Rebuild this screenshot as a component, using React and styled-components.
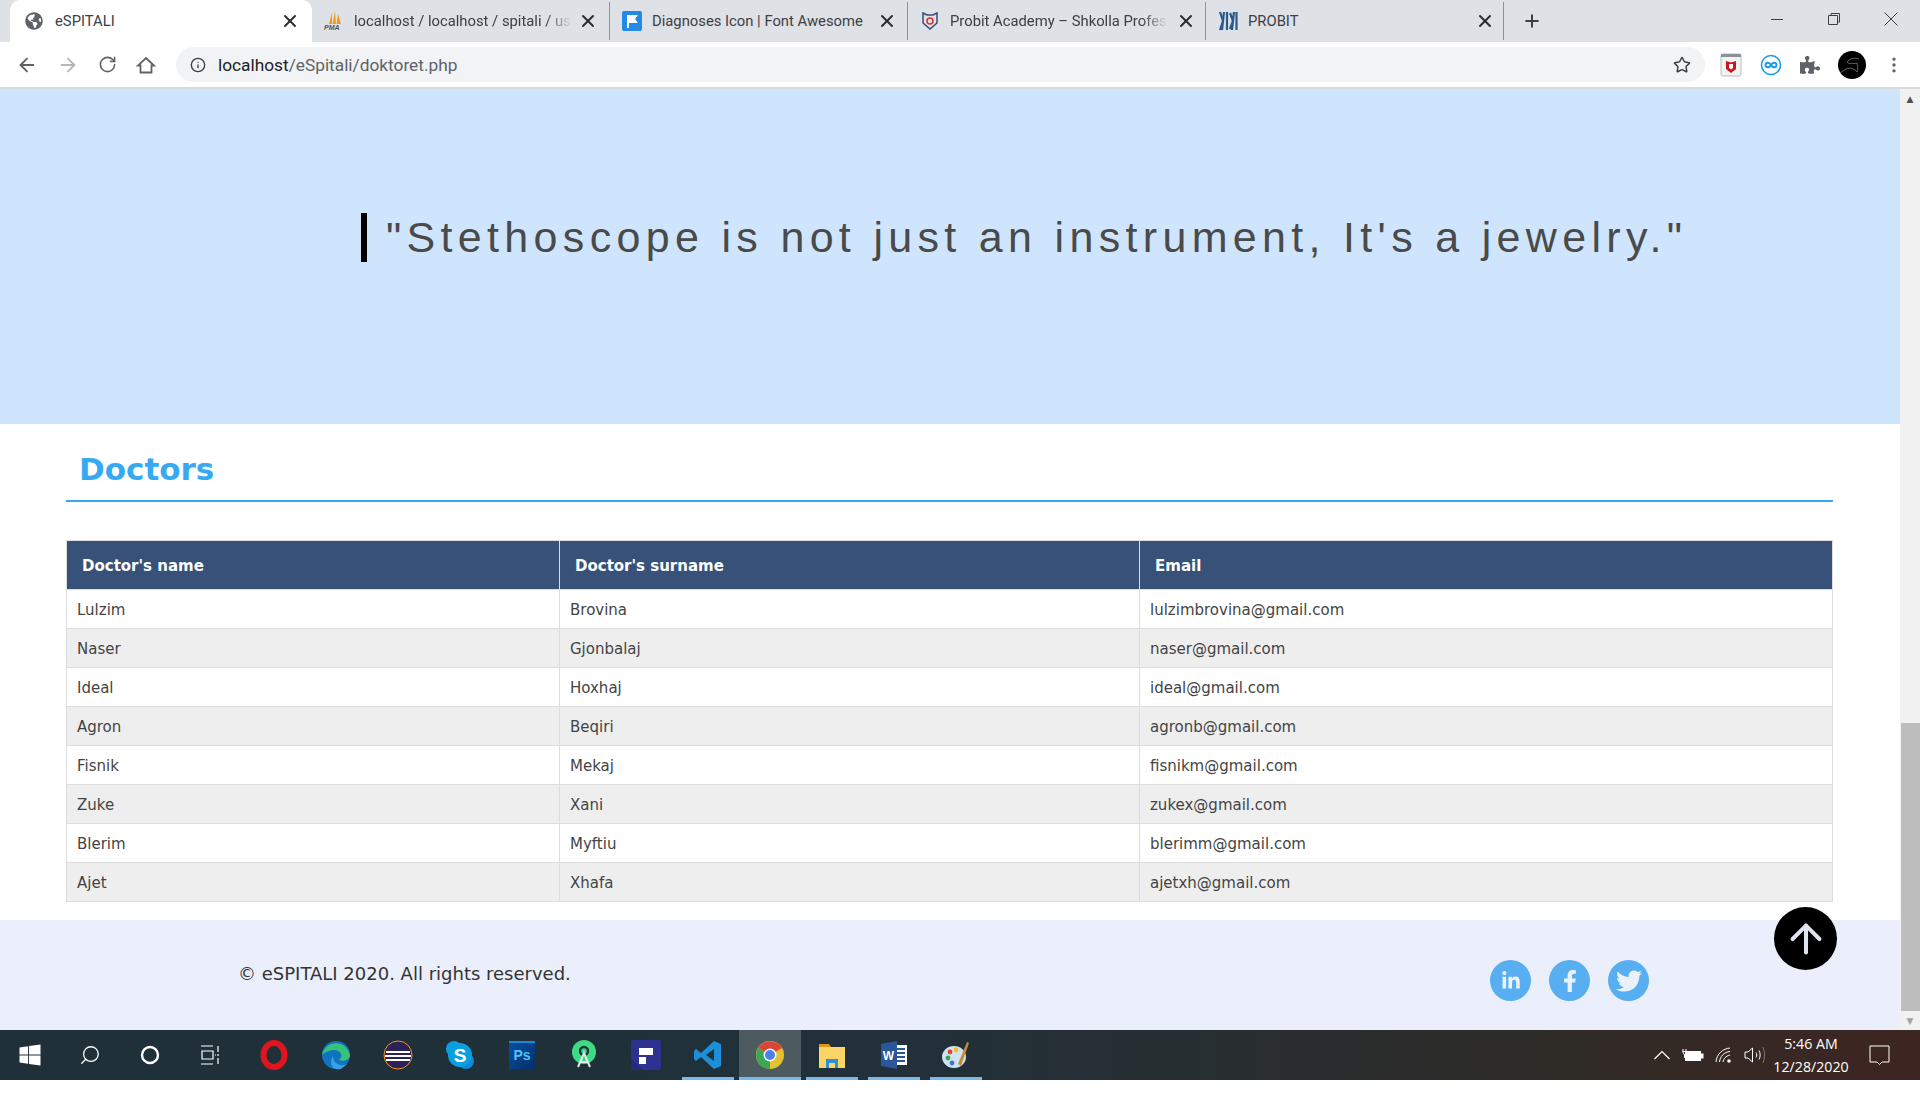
import React from 'react';
import styled, { createGlobalStyle } from 'styled-components';
import { ArrowLeft, ArrowRight, RotateCw, Info, Star, Plus, X, MoreVertical, Search, ArrowUp } from 'lucide-react';
import { FaLinkedinIn, FaFacebookF, FaTwitter, FaWindows, FaGlobeAmericas, FaPuzzlePiece } from 'react-icons/fa';

const GlobalStyle = createGlobalStyle`
  html, body { margin: 0; padding: 0; background: #fff; overflow: hidden; }
  * { box-sizing: border-box; }
`;

const Screen = styled.div`
  width: 1920px;
  height: 1098px;
  display: flex;
  flex-direction: column;
  background: #fff;
  overflow: hidden;
  font-family: "DejaVu Sans", Verdana, sans-serif;
`;

/* browser chrome */
const TabStrip = styled.div`
  height: 42px;
  flex: none;
  display: flex;
  background: #dee1e6;
  padding-left: 10px;
`;
const Tab = styled.div`
  width: ${(p) => (p.$active ? '302px' : '298px')};
  height: ${(p) => (p.$active ? '42px' : '38px')};
  margin-top: ${(p) => (p.$active ? '0' : '2px')};
  display: flex;
  align-items: center;
  padding-left: ${(p) => (p.$active ? '15px' : '12px')};
  gap: ${(p) => (p.$active ? '12px' : '10px')};
  background: ${(p) => (p.$active ? '#fff' : 'transparent')};
  border-radius: ${(p) => (p.$active ? '10px 10px 0 0' : '0')};
  border-right: ${(p) => (p.$active ? 'none' : '1px solid #8f9398')};
  svg { flex: none; }
`;
const TabTitle = styled.span`
  flex: none;
  width: 218px;
  margin-right: -20px;
  white-space: nowrap;
  font: 14.8px/18px Roboto, sans-serif;
  color: #3c4043;
  mask-image: ${(p) => (p.$fade ? 'linear-gradient(90deg, #000 88%, transparent 100%)' : 'none')};
`;
const TabClose = styled.span`
  display: flex;
  margin-left: auto;
  margin-right: ${(p) => p.$right}px;
  color: #2a2c2f;
`;
const NewTab = styled.div`
  display: flex;
  align-items: center;
  margin-left: 18px;
  color: #3c4043;
`;
const WindowButtons = styled.div`
  margin-left: auto;
  display: flex;
  align-items: center;
  height: 38px;
  gap: 43px;
  padding-right: 22px;
`;
const Toolbar = styled.div`
  height: 47px;
  flex: none;
  display: flex;
  align-items: center;
  background: #fff;
  border-bottom: 2px solid #dadada;
  padding: 0 16px;
`;
const NavIcons = styled.div`
  display: flex;
  align-items: center;
  gap: 19px;
  width: 160px;
  flex: none;
  color: #5f6368;
`;
const Omnibox = styled.div`
  width: 1529px;
  height: 35px;
  flex: none;
  display: flex;
  align-items: center;
  gap: 12px;
  background: #f1f3f4;
  border-radius: 18px;
  padding: 0 14px;
  color: #5f6368;
`;
const UrlText = styled.span`
  font: 17.3px/20px Roboto, sans-serif;
  color: #5f6368;
  b { font-weight: 400; color: #202124; }
`;
const StarSlot = styled.span`
  margin-left: auto;
  display: flex;
`;
const Extensions = styled.div`
  flex: 1;
  display: flex;
  align-items: center;
  justify-content: space-between;
  padding-left: 15px;
  color: #5f6368;
`;

/* page */
const Viewport = styled.div`
  height: 941px;
  flex: none;
  display: flex;
  position: relative;
`;
const Page = styled.div`
  width: 1900px;
  flex: none;
  display: flex;
  flex-direction: column;
`;
const Banner = styled.section`
  height: 335px;
  flex: none;
  background: #cfe5fd;
  padding: 124px 0 0 361px;
`;
const Quote = styled.blockquote`
  margin: 0;
  border-left: 6px solid #000;
  padding-left: 19px;
  font: 43px/49px "Liberation Sans", Arial, sans-serif;
  letter-spacing: 5.32px;
  color: #4a4a4a;
  white-space: nowrap;
`;
const Section = styled.section`
  flex: 1;
  padding: 0 67px 0 66px;
`;
const SectionTitle = styled.h2`
  margin: 0;
  height: 78px;
  padding: 26px 0 0 13px;
  font: 700 31px/38px "DejaVu Sans", Verdana, sans-serif;
  color: #35aaf3;
  border-bottom: 2px solid #35aaf3;
`;
const Table = styled.table`
  margin-top: 38px;
  width: 100%;
  table-layout: fixed;
  border-collapse: collapse;
  font-size: 15px;
  color: #444;
`;
const Column = styled.col`
  width: ${(p) => p.$w || 'auto'};
`;
const HeadCell = styled.th`
  height: 49px;
  padding: 2px 15px 0;
  background: #375179;
  color: #fff;
  font-size: 15px;
  font-weight: 700;
  text-align: left;
  border: 1px solid #ddd;
`;
const Row = styled.tr`
  background: ${(p) => (p.$even ? '#eee' : '#fff')};
`;
const Cell = styled.td`
  height: 39px;
  padding: 2px 10px 0;
  border: 1px solid #ddd;
`;
const Footer = styled.footer`
  height: 110px;
  flex: none;
  display: flex;
  background: #ebeffb;
  padding: 41px 251px 0 238px;
`;
const Copyright = styled.span`
  font-size: 18px;
  line-height: 26px;
  color: #333;
`;
const Socials = styled.div`
  display: flex;
  gap: 18px;
  margin: -1px 0 0 auto;
  align-self: flex-start;
`;
const SocialLink = styled.a`
  width: 41px;
  height: 41px;
  border-radius: 50%;
  display: flex;
  align-items: center;
  justify-content: center;
  background: #57aef1;
  color: #e9f2fb;
  font-size: ${(p) => p.$size || 22}px;
`;
const BackToTop = styled.a`
  position: absolute;
  left: 1774px;
  top: 818px;
  width: 63px;
  height: 63px;
  border-radius: 50%;
  background: #000;
  color: #dfe4f2;
  display: flex;
  align-items: center;
  justify-content: center;
`;
const Scrollbar = styled.div`
  width: 20px;
  flex: none;
  display: flex;
  flex-direction: column;
  background: #f1f1f1;
`;
const ScrollArrow = styled.div`
  height: 19px;
  flex: none;
  display: flex;
  align-items: center;
  justify-content: center;
  font-size: 9px;
  color: ${(p) => (p.$dim ? '#a3a3a3' : '#505050')};
`;
const ScrollGap = styled.div`
  flex: 1;
`;
const ScrollThumb = styled.div`
  height: 288px;
  flex: none;
  margin-left: 1px;
  background: #bdbdbd;
`;

/* windows taskbar */
const Taskbar = styled.div`
  height: 50px;
  flex: none;
  display: flex;
  align-items: center;
  background: linear-gradient(90deg, #1f3039 0%, #21303a 45%, #2e2c28 80%, #3e2521 100%);
  color: #fff;
`;
const SystemIcon = styled.div`
  width: 60px;
  height: 50px;
  flex: none;
  display: flex;
  align-items: center;
  justify-content: center;
`;
const TaskApps = styled.div`
  display: flex;
  margin-left: 3px;
`;
const TaskIcon = styled.div`
  width: 62px;
  height: 50px;
  flex: none;
  display: flex;
  align-items: center;
  justify-content: center;
  background: ${(p) => (p.$active ? '#4d5a60' : 'transparent')};
  position: relative;
  &::after {
    content: '';
    display: ${(p) => (p.$open ? 'block' : 'none')};
    position: absolute;
    left: ${(p) => (p.$active ? '0' : '5px')};
    right: ${(p) => (p.$active ? '0' : '5px')};
    bottom: 0;
    height: 3px;
    background: #76b9ed;
  }
`;
const SearchGlass = styled(Search)`
  transform: scaleX(-1);
`;
const Tray = styled.div`
  margin-left: auto;
  display: flex;
  align-items: center;
  gap: 11px;
  padding-right: 30px;
`;
const Clock = styled.div`
  width: 76px;
  margin: 0 9px 0 -3px;
  font: 14.2px/23px "Open Sans", sans-serif;
  text-align: center;
  white-space: nowrap;
`;

const doctors = [
  ['Lulzim', 'Brovina', 'lulzimbrovina@gmail.com'],
  ['Naser', 'Gjonbalaj', 'naser@gmail.com'],
  ['Ideal', 'Hoxhaj', 'ideal@gmail.com'],
  ['Agron', 'Beqiri', 'agronb@gmail.com'],
  ['Fisnik', 'Mekaj', 'fisnikm@gmail.com'],
  ['Zuke', 'Xani', 'zukex@gmail.com'],
  ['Blerim', 'Myftiu', 'blerimm@gmail.com'],
  ['Ajet', 'Xhafa', 'ajetxh@gmail.com'],
];

const PmaIcon = () => (
  <svg width="20" height="20" viewBox="0 0 20 20">
    <path d="M8 1 L5 13 H8 Z M11 0 L8.5 13 H12 Z M14 3 L12.5 13 H17 Z" fill="#f29a18" />
    <text x="0" y="19" fontSize="7" fontWeight="700" fontStyle="italic" fill="#555" fontFamily="Liberation Sans">PMA</text>
  </svg>
);
const FlagIcon = () => (
  <svg width="20" height="20" viewBox="0 0 20 20">
    <rect width="20" height="20" rx="2" fill="#228ae6" />
    <path d="M6 4 V17 M6 5 H14 L12 8 L14 11 H6" stroke="#fff" strokeWidth="2" fill="#fff" />
  </svg>
);
const ShieldIcon = () => (
  <svg width="20" height="20" viewBox="0 0 20 20" fill="none">
    <path d="M3 2 L7 4 H13 L17 2 V12 L10 18 L3 12 Z" stroke="#3a4a7c" strokeWidth="1.5" />
    <circle cx="10" cy="10" r="3" stroke="#d8362f" strokeWidth="1.6" />
  </svg>
);
const ProbitIcon = () => (
  <svg width="20" height="20" viewBox="0 0 20 20" fill="none" stroke="#2b5a8c" strokeWidth="2.2">
    <path d="M2 1 L5 10 L2 19 M6 1 L4 19 M9 1 V19 M12 2 L15 10 L12 18 M16 1 L14 19 M18.5 1 V19" />
  </svg>
);
const McAfeeIcon = () => (
  <svg width="22" height="24" viewBox="0 0 22 24">
    <rect x="1" y="1" width="20" height="22" rx="2" fill="#f3f3f3" stroke="#bbb" />
    <rect x="1" y="1" width="20" height="3" fill="#8a9299" />
    <path d="M6 8 L11 9.5 L16 8 V16 L11 20 L6 16 Z" fill="#c8161d" />
    <path d="M9 11 H13 V15 L11 16.5 L9 15 Z" fill="#fff" />
  </svg>
);
const LoopIcon = () => (
  <svg width="22" height="22" viewBox="0 0 22 22" fill="none">
    <circle cx="11" cy="11" r="9.5" stroke="#1a9cf0" strokeWidth="1.6" />
    <path d="M11 11 C9 7.5 5.5 8.5 5.5 11 C5.5 13.5 9 14.5 11 11 C13 7.5 16.5 8.5 16.5 11 C16.5 13.5 13 14.5 11 11" stroke="#1a9cf0" strokeWidth="2" />
  </svg>
);
const AvatarLogo = () => (
  <svg width="28" height="28" viewBox="0 0 28 28" fill="none">
    <circle cx="14" cy="14" r="14" fill="#000" />
    <path d="M21 8 C17 6 10 8 9.5 11 C9 13 15 13 19 12 M19 12 C20 15 20 19 19 21 C17 18 12 16 8 18 L2 22" stroke="#8d8d8d" strokeWidth="0.7" />
  </svg>
);
const HomeIcon = () => (
  <svg width="20" height="20" viewBox="0 0 20 20" fill="none" stroke="currentColor" strokeWidth="1.8">
    <path d="M10 3 L18 10.5 H15.5 V17.5 H4.5 V10.5 H2 Z" />
  </svg>
);
const MinimizeIcon = () => (
  <svg width="14" height="14" viewBox="0 0 14 14" stroke="#3c4043"><path d="M1 7.5 H13" /></svg>
);
const RestoreIcon = () => (
  <svg width="14" height="14" viewBox="0 0 14 14" fill="none" stroke="#3c4043"><path d="M1.5 3.5 H10.5 V12.5 H1.5 Z M4 3.5 V1.5 H12.5 V10 H10.5" /></svg>
);
const CloseIcon = () => (
  <svg width="14" height="14" viewBox="0 0 14 14" stroke="#3c4043"><path d="M0.5 0.5 L13.5 13.5 M13.5 0.5 L0.5 13.5" /></svg>
);

const CortanaRing = () => (
  <svg width="20" height="20" viewBox="0 0 20 20" fill="none"><circle cx="10" cy="10" r="8" stroke="#fff" strokeWidth="2.4" /></svg>
);
const TaskView = () => (
  <svg width="20" height="20" viewBox="0 0 20 20" fill="none" stroke="#fff" strokeWidth="1.2">
    <path d="M1 1 H13 M1 19 H13 M2 6 H13 V14 H2 Z M18 1 V7 M18 9 V11 M18 13 V19 M15 10 H16" />
  </svg>
);
const Opera = () => (
  <svg width="28" height="30" viewBox="0 0 28 30" fill="none">
    <ellipse cx="14" cy="15" rx="10.5" ry="12" stroke="#e0141f" strokeWidth="6" />
  </svg>
);
const Edge = () => (
  <svg width="30" height="30" viewBox="0 0 30 30">
    <circle cx="15" cy="15" r="14" fill="#1173bf" />
    <path d="M1 15 C3 2 24 -3 29 15 C29 20 22 22 18 20 C24 15 18 9 12 10 C6 11 3 13 1 15Z" fill="#35c27c" />
    <path d="M12 16 C12 24 20 27 26 24 L20 29 C10 31 8 22 12 16Z" fill="#3aa0e6" />
  </svg>
);
const Eclipse = () => (
  <svg width="30" height="30" viewBox="0 0 30 30">
    <circle cx="15" cy="15" r="14" fill="#2c2255" stroke="#f7941e" strokeWidth="1" />
    <path d="M3 11 H27 V13 H3 Z M2 15 H28 V17 H2 Z M3 19 H27 V21 H3 Z" fill="#fff" />
  </svg>
);
const Skype = () => (
  <svg width="30" height="30" viewBox="0 0 30 30">
    <circle cx="9" cy="9" r="8" fill="#0a9fe0" />
    <circle cx="21" cy="21" r="8" fill="#0a8ad4" />
    <circle cx="15" cy="15" r="12" fill="#0a9fe0" />
    <text x="15" y="22" fontSize="19" fontWeight="700" fill="#fff" textAnchor="middle" fontFamily="Liberation Sans">S</text>
  </svg>
);
const Photoshop = () => (
  <svg width="28" height="30" viewBox="0 0 28 30">
    <defs>
      <linearGradient id="psFill" x1="0" y1="0" x2="1" y2="1">
        <stop offset="0" stopColor="#0a4f9e" />
        <stop offset="1" stopColor="#03306a" />
      </linearGradient>
    </defs>
    <rect x="1" y="1" width="26" height="28" fill="url(#psFill)" />
    <rect x="1" y="1" width="26" height="2" fill="#1689e0" />
    <text x="14" y="20" fontSize="14" fontWeight="700" fill="#4fc3f7" textAnchor="middle" fontFamily="Liberation Sans">Ps</text>
  </svg>
);
const AndroidStudio = () => (
  <svg width="28" height="30" viewBox="0 0 28 30">
    <circle cx="14" cy="12" r="12" fill="#3ddc84" />
    <circle cx="14" cy="11" r="4" fill="none" stroke="#20333a" strokeWidth="2.4" />
    <path d="M8 27 L14 13 L20 27 M11 22 H17" stroke="#dfe8ea" strokeWidth="2" fill="none" />
  </svg>
);
const Blueprint = () => (
  <svg width="30" height="30" viewBox="0 0 30 30">
    <rect width="30" height="30" rx="2" fill="#2d3290" />
    <path d="M0 18 L12 30 H2 Q0 30 0 28 Z" fill="#262a7c" />
    <rect x="8" y="8" width="14" height="7" fill="#fff" />
    <rect x="8" y="17" width="7" height="7" fill="#fff" />
  </svg>
);
const VsCode = () => (
  <svg width="30" height="30" viewBox="0 0 30 30">
    <path d="M21 1 L28 4 V26 L21 29 L8 17 L3 21 L1 19 V11 L3 9 L8 13 Z M21 9 L13 15 L21 21 Z" fill="#1c8fd8" />
  </svg>
);
const Chrome = () => (
  <svg width="30" height="30" viewBox="0 0 30 30">
    <circle cx="15" cy="15" r="14" fill="#e4c22f" />
    <path d="M15 15 L3 8 A14 14 0 0 1 27 8 Z" fill="#db4437" />
    <path d="M15 15 L3 8 A14 14 0 0 0 15 29 Z" fill="#3aa757" />
    <circle cx="15" cy="15" r="6.5" fill="#fff" />
    <circle cx="15" cy="15" r="5" fill="#4a80ea" />
  </svg>
);
const Explorer = () => (
  <svg width="30" height="30" viewBox="0 0 30 30">
    <path d="M2 4 H12 L14 7 H2 Z" fill="#d99a1c" />
    <rect x="2" y="7" width="26" height="21" fill="#fbd566" />
    <path d="M9 28 V19 H21 V28 H18 V23 H12 V28 Z" fill="#2d8fd8" />
  </svg>
);
const Word = () => (
  <svg width="30" height="30" viewBox="0 0 30 30">
    <rect x="12" y="5" width="16" height="20" fill="#fff" />
    <path d="M15 9 H26 M15 13 H26 M15 17 H26 M15 21 H26" stroke="#2b579a" strokeWidth="2" />
    <path d="M2 4 L18 1 V29 L2 26 Z" fill="#2b579a" />
    <text x="9.5" y="20" fontSize="12" fontWeight="700" fill="#fff" textAnchor="middle" fontFamily="Liberation Sans">W</text>
  </svg>
);
const Paint = () => (
  <svg width="30" height="30" viewBox="0 0 30 30">
    <ellipse cx="13" cy="17" rx="12" ry="11" fill="#cfe3f0" />
    <circle cx="9" cy="12" r="2.4" fill="#e0452f" />
    <circle cx="15" cy="10" r="2.4" fill="#f2c12e" />
    <circle cx="7" cy="18" r="2.4" fill="#3aa757" />
    <circle cx="11" cy="23" r="2.4" fill="#3c78d8" />
    <path d="M17 24 L26 2 L28 3 L20 26 Z" fill="#c98a3c" />
  </svg>
);

/* tray */
const TrayChevron = () => (
  <svg width="18" height="12" viewBox="0 0 18 12" fill="none" stroke="#fff" strokeWidth="1.2"><path d="M1.5 10 L9 2.5 L16.5 10" /></svg>
);
const TrayBattery = () => (
  <svg width="22" height="14" viewBox="0 0 22 14" fill="none" stroke="#fff">
    <path d="M1 1 V3.5 M4 1 V3.5 M0.5 3.5 H4.5 V5.5 L2.5 7 Z M2.5 7 V10" />
    <rect x="3.5" y="3.5" width="15" height="9" fill="#fff" />
    <rect x="19" y="6" width="2" height="4" fill="#fff" />
  </svg>
);
const TrayWifi = () => (
  <svg width="18" height="16" viewBox="0 0 18 16" fill="none" stroke="#fff">
    <path d="M1 15 C1.5 7 8 1.5 15 1 M4.5 15 C5 9.5 9 5 15 4.5 M8 15 C8.5 12 10.5 9 15 8" />
    <circle cx="14" cy="14" r="1.8" fill="#fff" stroke="none" />
  </svg>
);
const TrayVolume = () => (
  <svg width="21" height="18" viewBox="0 0 21 18" fill="none" stroke="#fff">
    <path d="M1 6 H4 L8.5 2 V16 L4 12 H1 Z" />
    <path d="M12 6.5 C13 8 13 10 12 11.5 M15 4.5 C16.5 7 16.5 11 15 13.5" />
    <path d="M19 1 C21 6 21 12 19 17" stroke="#7d7470" />
  </svg>
);
const TrayNotifications = () => (
  <svg width="21" height="21" viewBox="0 0 21 21" fill="none" stroke="#fff">
    <path d="M1 1 H20 V17 H13 L10.5 19.5 L8 17 H1 Z" />
  </svg>
);

const taskApps = [
  { key: 'opera', el: <Opera /> },
  { key: 'edge', el: <Edge /> },
  { key: 'eclipse', el: <Eclipse /> },
  { key: 'skype', el: <Skype /> },
  { key: 'ps', el: <Photoshop /> },
  { key: 'android', el: <AndroidStudio /> },
  { key: 'blueprint', el: <Blueprint /> },
  { key: 'vscode', el: <VsCode />, open: true },
  { key: 'chrome', el: <Chrome />, open: true, active: true },
  { key: 'explorer', el: <Explorer />, open: true },
  { key: 'word', el: <Word />, open: true },
  { key: 'paint', el: <Paint />, open: true },
];

const tabs = [
  { icon: <PmaIcon />, title: 'localhost / localhost / spitali / use', fade: true, right: 11 },
  { icon: <FlagIcon />, title: 'Diagnoses Icon | Font Awesome', right: 10 },
  { icon: <ShieldIcon />, title: 'Probit Academy – Shkolla Profesi', fade: true, right: 9 },
  { icon: <ProbitIcon />, title: 'PROBIT', right: 8 },
];

export default function App() {
  return (
    <Screen>
      <GlobalStyle />
      <TabStrip>
        <Tab $active>
          <FaGlobeAmericas size={18} color="#5f6368" />
          <TabTitle>eSPITALI</TabTitle>
          <TabClose $right={12}><X size={20} strokeWidth={2.4} /></TabClose>
        </Tab>
        {tabs.map((t) => (
          <Tab key={t.title}>
            {t.icon}
            <TabTitle $fade={t.fade}>{t.title}</TabTitle>
            <TabClose $right={t.right}><X size={20} strokeWidth={2.4} /></TabClose>
          </Tab>
        ))}
        <NewTab><Plus size={20} strokeWidth={2.4} /></NewTab>
        <WindowButtons>
          <MinimizeIcon />
          <RestoreIcon />
          <CloseIcon />
        </WindowButtons>
      </TabStrip>
      <Toolbar>
        <NavIcons>
          <ArrowLeft size={22} />
          <ArrowRight size={22} color="#b4b7bb" />
          <RotateCw size={19} />
          <HomeIcon />
        </NavIcons>
        <Omnibox>
          <Info size={16} color="#3c4043" />
          <UrlText><b>localhost</b>/eSpitali/doktoret.php</UrlText>
          <StarSlot><Star size={18} color="#3c4043" /></StarSlot>
        </Omnibox>
        <Extensions>
          <McAfeeIcon />
          <LoopIcon />
          <FaPuzzlePiece size={20} />
          <AvatarLogo />
          <MoreVertical size={20} />
        </Extensions>
      </Toolbar>
      <Viewport>
        <Page>
          <Banner>
            <Quote>"Stethoscope is not just an instrument, It's a jewelry."</Quote>
          </Banner>
          <Section>
            <SectionTitle>Doctors</SectionTitle>
            <Table>
              <colgroup>
                <Column $w="493px" />
                <Column $w="580px" />
                <Column />
              </colgroup>
              <thead>
                <tr>
                  <HeadCell>Doctor's name</HeadCell>
                  <HeadCell>Doctor's surname</HeadCell>
                  <HeadCell>Email</HeadCell>
                </tr>
              </thead>
              <tbody>
                {doctors.map((d, i) => (
                  <Row key={d[2]} $even={i % 2 === 1}>
                    <Cell>{d[0]}</Cell>
                    <Cell>{d[1]}</Cell>
                    <Cell>{d[2]}</Cell>
                  </Row>
                ))}
              </tbody>
            </Table>
          </Section>
          <Footer>
            <Copyright>© eSPITALI 2020. All rights reserved.</Copyright>
            <Socials>
              <SocialLink $size={20}><FaLinkedinIn /></SocialLink>
              <SocialLink><FaFacebookF /></SocialLink>
              <SocialLink $size={26}><FaTwitter /></SocialLink>
            </Socials>
          </Footer>
        </Page>
        <BackToTop><ArrowUp size={46} strokeWidth={2.1} /></BackToTop>
        <Scrollbar>
          <ScrollArrow>▲</ScrollArrow>
          <ScrollGap />
          <ScrollThumb />
          <ScrollArrow $dim>▼</ScrollArrow>
        </Scrollbar>
      </Viewport>
      <Taskbar>
        <SystemIcon><FaWindows size={24} /></SystemIcon>
        <SystemIcon><SearchGlass size={22} strokeWidth={1.4} /></SystemIcon>
        <SystemIcon><CortanaRing /></SystemIcon>
        <SystemIcon><TaskView /></SystemIcon>
        <TaskApps>
          {taskApps.map((a) => (
            <TaskIcon key={a.key} $open={a.open} $active={a.active}>{a.el}</TaskIcon>
          ))}
        </TaskApps>
        <Tray>
          <TrayChevron />
          <TrayBattery />
          <TrayWifi />
          <TrayVolume />
          <Clock>5:46 AM<br />12/28/2020</Clock>
          <TrayNotifications />
        </Tray>
      </Taskbar>
    </Screen>
  );
}
